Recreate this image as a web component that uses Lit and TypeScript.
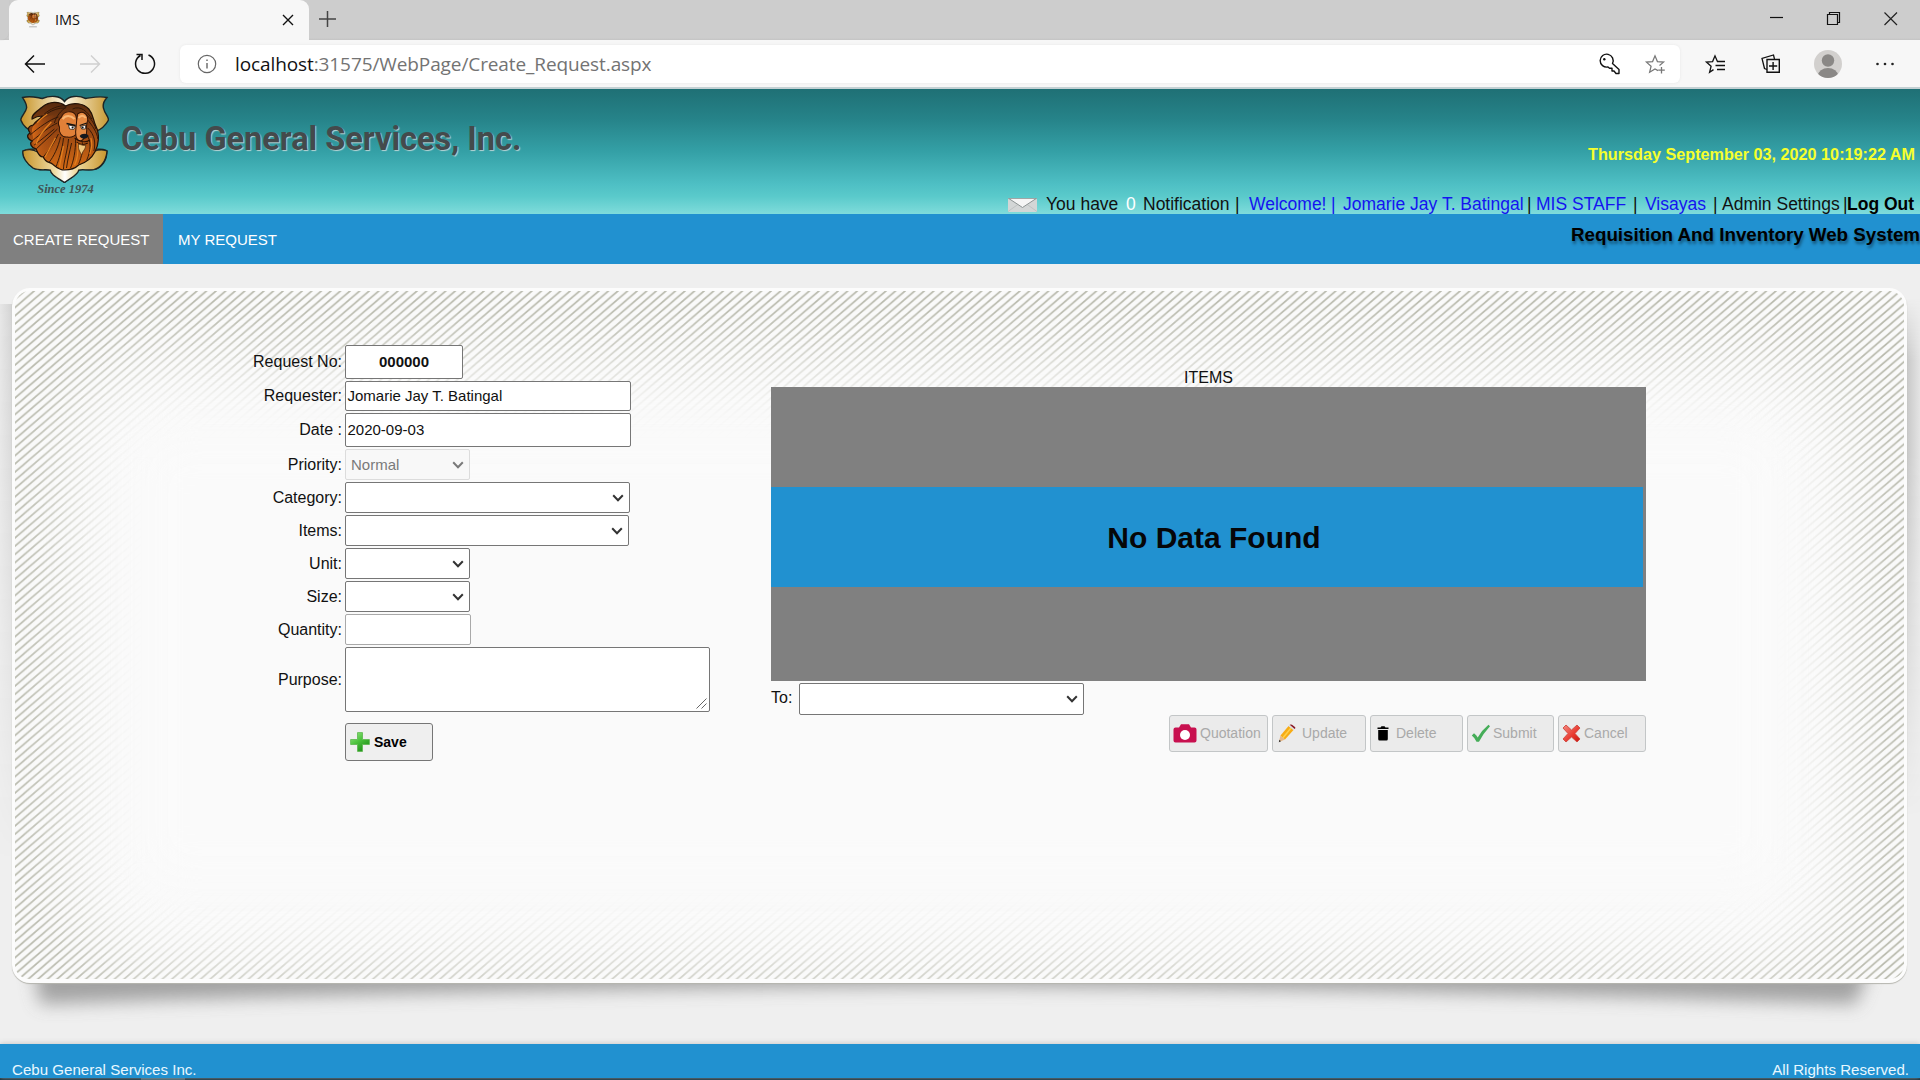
import { LitElement, html, css, svg, nothing } from "lit";
import { customElement, property } from "lit/decorators.js";

const chevron = html`<svg class="chev" width="12" height="8" viewBox="0 0 12 8"><path d="M1.2 1.3 6 6.2 10.8 1.3" fill="none" stroke="currentColor" stroke-width="2"/></svg>`;

const lion = svg`
  <defs>
    <linearGradient id="gold" x1="0" x2="1"><stop offset="0" stop-color="#c79427"/><stop offset=".5" stop-color="#fdf6e4"/><stop offset="1" stop-color="#c99a34"/></linearGradient>
    <linearGradient id="gold2" x1="0" x2="1"><stop offset="0" stop-color="#c8952c"/><stop offset=".38" stop-color="#f0dca4"/><stop offset=".5" stop-color="#ffffff"/><stop offset=".62" stop-color="#f0dca4"/><stop offset="1" stop-color="#c8952c"/></linearGradient>
    <linearGradient id="mane" x1="0" y1="0" x2="0" y2="1"><stop offset="0" stop-color="#54290f"/><stop offset=".45" stop-color="#9a4812"/><stop offset="1" stop-color="#d46a14"/></linearGradient>
    <linearGradient id="mane2" x1="0" y1="0" x2="1" y2="0"><stop offset="0" stop-color="#d96a18"/><stop offset="1" stop-color="#7a3310" stop-opacity="0"/></linearGradient>
  </defs>
  <path d="M2.5 2.5C11 .5 16 2.5 22 3.500C30 .2 40 .5 44 6.500C48 .5 58 .2 65 3.500C72 2.500 78 .8 86 2.500C83 6 81.500 11 83 14.500C83.500 18 87.500 21 87.500 25C84 32 79 35 74 37L74 54C79 54 84 54 86 56C86 65 81 73 73 74.500C67 75.500 62 74 58 75C57 80 51 82 44 87.500C36 82 31 80 30 75C25 74 19 76 13 73C7 69 2 62 3 56C7 54 11 54 15 54L14 37C8 35 3 31 .8 25C1 21 6 17 6.500 13C7 9 4 5 2.500 2.500Z" fill="url(#gold)" stroke="#1d2526" stroke-width="1.400"/>
  <path d="M3 56C12 52 20 57 26 65C34 69 54 69 61 65C68 57 78 53 86 56C85 66 80 73 73 74.500C67 75.500 62 74 58 75C57 80 51 82 44 87.500C36 82 31 80 30 75C25 74 19 76 13 73C7 69 2 62 3 56Z" fill="url(#gold2)" stroke="#1d2526" stroke-width="1.200"/>
  <path d="M12 24C11 20 17 16 22 12C29 6 39 6 45 11C52 7 63 8 68 14C73 20 72 25 75 31C79 39 78 50 74 57C70 65 64 68 58 70C54 74 48 75 44 75C38 75 35 71 32 69C29 66 26 69 23 62C19 62 17 57 16 54C11 53 9 48 12 46C7 44 6 40 10 38C7 34 8 31 13 30C15 26 19 25 22 21C18 21 15 22 12 24Z" fill="url(#mane)" stroke="#211208" stroke-width="1.200"/>
  <path d="M13 31C10 36 14 42 13 47C15 53 19 58 24 62C30 60 34 50 39 38L33 20C26 21 18 26 13 31Z" fill="url(#mane2)"/>
  <path d="M45 11C38 10 30 14 24 19M46 12C40 16 36 21 34 28M45 13C32 12 20 23 12 31M38 22C30 24 18 33 10 40M37 28C30 31 20 39 12 46M37 34C31 40 22 48 16 54M38 39C34 48 28 56 23 62M40 42C38 52 33 62 29 67M43 43C42 54 38 65 36 71M48 44C47 56 43 67 43 74M55 44C55 56 53 66 50 73M61 44C63 53 61 62 58 69M65 38C71 46 70 56 66 65M67 33C74 40 75 48 73 56M66 24C72 31 76 37 77 44M63 18C69 22 73 27 75 34M52 14C60 10 67 17 71 24M51 48C49 57 47 65 46 73M34 34C29 38 20 46 14 50" fill="none" stroke="#2b1508" stroke-width=".900"/>
  <path d="M31 27C24 34 18 42 16 49M35 43C31 51 27 57 25 62M43 51C41 60 40 67 39 72M57 48C58 58 57 64 54 70M70 43C72 48 71 53 69 59M27 19C23 22 19 25 17 28" fill="none" stroke="#e3811f" stroke-width="1.200"/>
  <path d="M41 22C43 16 52 15 55 20L57 28L57 35C57 41 50 43 47 42C41 43 38 37 39 32C37 29 38 24 41 22Z" fill="#e18038" stroke="#341405" stroke-width="1"/>
  <path d="M57 19C62 15 67 19 67 25C66 29 65 31 66 35C66 40 64 44 60 46C56 46 55 42 55 37L56 26Z" fill="#e68a43" stroke="#341405" stroke-width="1"/>
  <path d="M42 24C45 20 50 20 54 24M58 23C60 20 63 20 65 23" fill="none" stroke="#f8b573" stroke-width="2.200"/>
  <path d="M48 30 55 31.500 53 34.500 49 34ZM60 31.500 65 30 64.500 34 61 34Z" fill="#fff" stroke="#111" stroke-width=".700"/>
  <circle cx="52" cy="32.500" r="1" fill="#111"/><circle cx="62" cy="32.500" r="1" fill="#111"/>
  <path d="M46 28.500 55 30.500M59 30.500 66 28" stroke="#111" stroke-width="1.300"/>
  <path d="M59 41C61 38 66 38 68 41C66 44 61 45 59 41Z" fill="#15181e"/>
  <path d="M54 43C59 47 65 48 69 45M56 47C59 50 64 50 67 48" stroke="#2a1005" fill="none" stroke-width="1"/>
  <path d="M58 49C61 50 64 51 65 50C65 55 62 55 61 60C59 56 57 54 58 49Z" fill="#f0c87e" stroke="#5d3511" stroke-width=".800"/>`;

@customElement("browser-bar")
class BrowserBar extends LitElement {
  static styles = css`
    :host { display: block; height: 89px; font-family: "Open Sans", "Noto Sans", sans-serif; }
    svg { display: block; overflow: visible; flex: none; }
    .tabs { height: 40px; display: flex; box-sizing: border-box; background: linear-gradient(#cdcdcd, #cdcdcd 38px, #c4c4c4); }
    .lead { width: 9px; background: #cdcdcd; border-bottom-right-radius: 8px; box-shadow: 0 0 1px #bbb; }
    .tab { width: 300px; height: 40px; background: #f7f7f7; border-radius: 9px 9px 0 0; display: flex; align-items: center; box-sizing: border-box; padding: 0 15px 0 16px; }
    .fav { margin-right: 14px; }
    .name { font-size: 14.500px; color: #111; flex: 1; position: relative; top: -1px; }
    .plus { margin: 11px 0 0 10px; }
    .win { margin-left: auto; display: flex; padding: 12px 22px 0 0; gap: 43px; }
    .tools { height: 47px; background: #f7f7f7; display: flex; align-items: center; box-sizing: border-box; padding-left: 24px; }
    .nav { display: flex; align-items: center; width: 156px; }
    .nav svg:nth-child(2) { margin: 0 0 0 33px; }
    .nav svg:nth-child(3) { margin: 0 0 0 33px; }
    .addr { width: 1500px; height: 38px; margin-top: 1px; background: #fff; border-radius: 6px; box-shadow: 0 0 3px #e6e6e6; display: flex; align-items: center; box-sizing: border-box; padding: 0 15px 0 17px; }
    .url { margin-left: 18px; font-size: 19px; letter-spacing: -.1px; color: #737373; flex: 1; white-space: nowrap; }
    .url b { font-weight: 400; color: #111; }
    .addr .st { margin-left: 25px; }
    .right { display: flex; align-items: center; padding-left: 25px; }
    .r1 { margin-left: 35px; }
    .r2 { margin-left: 33px; }
    .r3 { margin-left: 34px; }
    .edge { height: 2px; background: #c3d0d3; }
  `;
  render() {
    return html`
      <div class="tabs">
        <div class="lead"></div>
        <div class="tab">
          <svg class="fav" width="16" height="16" viewBox="0 0 88 108">${lion}<path d="M18 100H70" stroke="#999" stroke-width="5"/></svg>
          <span class="name">IMS</span>
          <svg width="12" height="12" viewBox="0 0 12 12"><path d="M1 1 11 11M11 1 1 11" stroke="#111" stroke-width="1.400"/></svg>
        </div>
        <svg class="plus" width="17" height="16" viewBox="0 0 17 16"><path d="M8.500 0V16M0 8H17" stroke="#444" stroke-width="1.500"/></svg>
        <div class="win">
          <svg width="14" height="14"><path d="M0 5.500H13" stroke="#111" stroke-width="1.200"/></svg>
          <svg width="14" height="14"><path d="M.5 2.500H10.500V12.500H.5ZM2.500 2V.5H12.500V10.500H11" fill="none" stroke="#111" stroke-width="1.200"/></svg>
          <svg width="14" height="14"><path d="M.5.500 13 13M13 .5 .5 13" stroke="#222" stroke-width="1.200"/></svg>
        </div>
      </div>
      <div class="tools">
        <div class="nav">
          <svg width="22" height="20" viewBox="0 0 22 20"><path d="M10 1.500 1.500 10 10 18.500M1.500 10H21" fill="none" stroke="#111" stroke-width="1.500"/></svg>
          <svg width="22" height="20" viewBox="0 0 22 20"><path d="M12 1.500 20.500 10 12 18.500M20.500 10H1" fill="none" stroke="#d0d0d0" stroke-width="1.500"/></svg>
          <svg width="22" height="22" viewBox="0 0 22 22"><path d="M14.500 2A9.500 9.500 0 1 1 6.500 2.500M2.500 1.500H8V7" fill="none" stroke="#111" stroke-width="1.500"/></svg>
        </div>
        <div class="addr">
          <svg width="20" height="20" viewBox="0 0 20 20"><circle cx="10" cy="10" r="8.700" fill="none" stroke="#666" stroke-width="1.200"/><path d="M10 9V14.500M10 5.500V7" stroke="#666" stroke-width="1.400"/></svg>
          <span class="url"><b>localhost</b>:31575/WebPage/Create_Request.aspx</span>
          <svg width="21" height="21" viewBox="0 0 21 21"><path d="M9 13 10.500 14.200H13V17H15L17 19.500H20V15.500L13.500 9.500A6.500 6.500 0 1 0 9 13Z" fill="none" stroke="#111" stroke-width="1.400" stroke-linejoin="round"/><circle cx="5.300" cy="5.300" r="1.200" fill="#111"/></svg>
          <svg class="st" width="20" height="20" viewBox="0 0 20 20"><path d="M13 16.600 10 15 4.600 18.300 6.100 12.200 1.400 8.100 7.600 7.600 10 1.800 12.400 7.600 18.600 8.100 14.500 11.500" fill="none" stroke="#777" stroke-width="1.200"/><path d="M16.500 13V19.500M13.200 16.200H19.800" stroke="#777" stroke-width="1.300"/></svg>
        </div>
        <div class="right">
          <svg width="21" height="20" viewBox="0 0 21 20"><path d="M8.500 15.600 4.600 18.300 6.100 12.200 1.400 8.100 7.600 7.600 10 1.800 12.400 7.400" fill="none" stroke="#111" stroke-width="1.300"/><path d="M12 7.500H20M10.500 11.500H20M12 15.500H20" stroke="#111" stroke-width="1.400"/></svg>
          <svg class="r1" width="20" height="20" viewBox="0 0 20 20"><path d="M6 5.500H18.300V18.300H6Z M12.100 8V16M8 12H16.200" fill="none" stroke="#111" stroke-width="1.400"/><path d="M6 15.500 3.500 14.500 1 4.500 12.500 1 13.500 5" fill="none" stroke="#111" stroke-width="1.300"/></svg>
          <svg class="r2" width="28" height="28" viewBox="0 0 28 28"><defs><clipPath id="av"><circle cx="14" cy="14" r="14"/></clipPath></defs><g clip-path="url(#av)"><rect width="28" height="28" fill="#d2d0ce"/><circle cx="14" cy="10.500" r="6.200" fill="#8a8886"/><ellipse cx="14" cy="25.500" rx="10" ry="7.500" fill="#8a8886"/></g></svg>
          <svg class="r3" width="18" height="4"><circle cx="1.500" cy="2" r="1.300" fill="#222"/><circle cx="9" cy="2" r="1.300" fill="#222"/><circle cx="16.500" cy="2" r="1.300" fill="#222"/></svg>
        </div>
      </div>
      <div class="edge"></div>`;
  }
}

@customElement("site-header")
class SiteHeader extends LitElement {
  static styles = css`
    :host { display: block; }
    .banner { height: 125px; display: flex; background: linear-gradient(#1f7075 0%, #268389 24%, #34a0a6 50%, #4ebfc4 76%, #5acacb 86%, #7fdcdb 100%); }
    .brand { width: 960px; display: flex; }
    .crest { width: 89px; margin-left: 20px; padding-top: 6px; }
    .crest svg { display: block; }
    .since { font: italic 700 12.500px/16px "Liberation Serif", serif; color: #3f5557; text-align: center; margin-top: -2px; padding-left: 2px; }
    .title { margin: 28px 0 0 12px; font: 700 32.500px/44px Roboto, sans-serif; color: #444a4c; text-shadow: 1px 1px 1px #b9d4d5; white-space: nowrap; }
    .info { flex: 1; display: flex; flex-direction: column; align-items: flex-end; }
    .time { margin: 55px 5px 0 0; font: 700 16.200px/20px "Liberation Sans", sans-serif; color: #f6ff2c; white-space: nowrap; }
    .links { margin-top: 29px; width: 912px; height: 22px; display: grid; grid-template-columns: 38px 80px 17px 92px 14px 82px 12px 184px 9px 97px 12px 68px 9px 121px 4px 1fr; font: 17.500px/22px "Liberation Sans", sans-serif; color: #111; white-space: nowrap; }
    .u { color: #1414f0; }
    .w { color: #fff; }
    .k { color: #000; font-weight: 700; }
    .mail { display: block; margin-top: 5px; }
    .menu { height: 50px; background: #2191d0; display: flex; font: 15px/51px "Liberation Sans", sans-serif; color: #fff; }
    .menu a { padding: 0 15px; height: 50px; }
    .menu .on { background: #808080; padding: 0 13px; width: 137px; white-space: nowrap; }
    .sys { margin-left: auto; font-weight: 700; font-size: 18.750px; line-height: 41px; color: #000; text-shadow: 1px 3px 3px rgba(0,0,0,.4); white-space: nowrap; }
  `;
  render() {
    return html`
      <div class="banner">
        <div class="brand">
          <div class="crest"><svg width="89" height="88" viewBox="0 0 88 88" preserveAspectRatio="none">${lion}</svg><div class="since">Since 1974</div></div>
          <div class="title">Cebu General Services, Inc.</div>
        </div>
        <div class="info">
          <div class="time">Thursday September 03, 2020 10:19:22 AM</div>
          <div class="links">
            <svg class="mail" width="29" height="14" viewBox="0 0 29 14"><rect width="29" height="14" rx="1.500" fill="#d3d6d6"/><path d="M0 13.500 10.500 6M29 13.500 18.500 6" stroke="#bfc3c3" fill="none"/><path d="M.5.300H28.500L14.500 9.500Z" fill="#f5f5f5" stroke="#8d9494" stroke-width="1"/></svg>
            <span>You have</span><span class="w">0</span><span>Notification</span><span>|</span>
            <span class="u">Welcome!</span><span class="u">|</span><span class="u">Jomarie Jay T. Batingal</span><span>|</span>
            <span class="u">MIS STAFF</span><span>|</span><span class="u">Visayas</span><span>|</span><span>Admin Settings</span><span>|</span><span class="k">Log Out</span>
          </div>
        </div>
      </div>
      <div class="menu"><a class="on">CREATE REQUEST</a><a>MY REQUEST</a><span class="sys">Requisition And Inventory Web System</span></div>`;
  }
}

interface Field { label: string; w: number; h: number; kind: string; value?: string; gap: number }
const fields: Field[] = [
  { label: "Request No:", w: 118, h: 34, kind: "center", value: "000000", gap: 2 },
  { label: "Requester:", w: 286, h: 30, kind: "text", value: "Jomarie Jay T. Batingal", gap: 2 },
  { label: "Date :", w: 286, h: 34, kind: "text", value: "2020-09-03", gap: 2 },
  { label: "Priority:", w: 125, h: 31, kind: "select off", value: "Normal", gap: 2 },
  { label: "Category:", w: 285, h: 31, kind: "select", gap: 2 },
  { label: "Items:", w: 284, h: 31, kind: "select", gap: 2 },
  { label: "Unit:", w: 125, h: 31, kind: "select", gap: 2 },
  { label: "Size:", w: 125, h: 31, kind: "select", gap: 2 },
  { label: "Quantity:", w: 126, h: 31, kind: "soft", gap: 2 },
  { label: "Purpose:", w: 365, h: 65, kind: "area", gap: 0 },
];

@customElement("request-form")
class RequestForm extends LitElement {
  static styles = css`
    :host { display: block; width: 710px; font: 16px/20px "Liberation Sans", sans-serif; color: #111; }
    .row { display: flex; align-items: center; }
    .lab { width: 342px; margin-right: 3px; text-align: right; }
    .box { box-sizing: border-box; border: 1px solid #767676; border-radius: 2px; background: #fff; font-size: 15px; padding: 0 1.500px; display: flex; align-items: center; white-space: nowrap; }
    .center { justify-content: center; font-weight: 700; }
    .soft { border-color: #a9a9a9; }
    .select { padding: 0 5px; justify-content: flex-end; color: #333; }
    .select span { flex: 1; }
    .off { background: #f8f8f8; border-color: #dcdcdc; color: #7a7a7a; }
    .area { justify-content: flex-end; align-items: flex-end; padding: 2px; }
    .save { margin: 11px 0 0 345px; width: 88px; height: 38px; box-sizing: border-box; border: 1px solid #767676; border-radius: 3px; background: #efefef; display: flex; align-items: center; padding-left: 4px; gap: 4px; font: 700 14px/20px "Liberation Sans", sans-serif; color: #000; }
  `;
  render() {
    return html`
      ${fields.map((f) => html`
        <div class="row" style="margin-bottom:${f.gap}px">
          <div class="lab">${f.label}</div>
          <div class="box ${f.kind}" style="width:${f.w}px;height:${f.h}px">
            ${f.value ? html`<span>${f.value}</span>` : nothing}
            ${f.kind.startsWith("select") ? chevron : nothing}
            ${f.kind === "area" ? html`<svg width="11" height="11"><path d="M.5 10.500 10.500.5M5.500 10.500 10.500 5.500" stroke="#666" stroke-width="1"/></svg>` : nothing}
          </div>
        </div>`)}
      <div class="save">
        <svg width="20" height="20" viewBox="0 0 20 20"><defs><linearGradient id="g" x1="0" y1="0" x2=".7" y2="1"><stop offset="0" stop-color="#9be88a"/><stop offset=".5" stop-color="#4cc23c"/><stop offset="1" stop-color="#1d8d18"/></linearGradient></defs><path d="M7.500.6H12.500V7.500H19.400V12.500H12.500V19.400H7.500V12.500H.6V7.500H7.500Z" fill="url(#g)" stroke="#5bb84c" stroke-width=".800"/></svg>
        Save
      </div>`;
  }
}

const icons: Record<string, unknown> = {
  Quotation: html`<svg width="24" height="19" viewBox="0 0 24 19"><path d="M2.500 3.500H6L8 .3H16L18 3.500H21.500Q23.500 3.500 23.500 5.500V16.500Q23.500 18.500 21.500 18.500H2.500Q.5 18.500.5 16.500V5.500Q.5 3.500 2.500 3.500Z" fill="#c8104f"/><circle cx="12" cy="11" r="5" fill="#fff"/></svg>`,
  Update: html`<svg width="19" height="19" viewBox="0 0 19 19"><path d="M.8 18.300 2.500 11.500 7 15.500Z" fill="#e7b98a"/><path d="M.8 18.300 1.400 15.800 3 17.200Z" fill="#333"/><path d="M2.500 11.500 10.500 2 15.500 6 7 15.500Z" fill="#f7ac15"/><path d="M5 13.700 13 4" stroke="#ffd04a" stroke-width="1.500"/><path d="M10.500 2 11.700.8 16.700 4.700 15.500 6Z" fill="#ddd"/><path d="M11.700.8Q13 0 14 .8L17 3Q18 4 16.700 4.900Z" fill="#8a1825"/></svg>`,
  Delete: html`<svg width="12" height="15" viewBox="0 0 12 15"><path d="M.5 1.500H3.500L4.500.3H7.500L8.500 1.500H11.500V3H.5ZM1.200 4H10.800V13Q10.800 14.500 9.500 14.500H2.500Q1.200 14.500 1.200 13Z" fill="#000"/></svg>`,
  Submit: html`<svg width="20" height="19" viewBox="0 0 20 19"><path d="M.8 11.500 3 9.200Q5.500 11 6.700 13.500Q11 6 17.500.8L19 2.200Q12.500 9 8 17.800H5.500Q4 14 .8 11.500Z" fill="#45ad58"/></svg>`,
  Cancel: html`<svg width="19" height="19" viewBox="0 0 19 19"><defs><linearGradient id="r" x1="0" y1="0" x2="1" y2="1"><stop offset="0" stop-color="#f58a80"/><stop offset=".6" stop-color="#e8382e"/><stop offset="1" stop-color="#c41812"/></linearGradient></defs><path d="M4 1 9.500 6 15 1 18 4 13 9.500 18 15 15 18 9.500 13 4 18 1 15 6 9.500 1 4Z" fill="url(#r)" stroke="#cf4a42" stroke-width=".900" stroke-linejoin="round"/></svg>`,
};

@customElement("action-button")
class ActionButton extends LitElement {
  @property() label = "";
  static styles = css`
    :host { display: flex; align-items: center; box-sizing: border-box; height: 37px; border: 1px solid #c3c6c7; border-radius: 3px; background: #ebebeb; font: 14px/20px "Liberation Sans", sans-serif; color: #a9a9a9; }
    svg { display: block; flex: none; }
    span { margin-top: -1px; }
  `;
  render() { return html`${icons[this.label]}<span>${this.label}</span>`; }
}

@customElement("items-pane")
class ItemsPane extends LitElement {
  static styles = css`
    :host { display: block; width: 875px; font: 16px/20px "Liberation Sans", sans-serif; color: #111; }
    .head { text-align: center; height: 20px; line-height: 22px; }
    .grid { background: #808080; height: 294px; box-sizing: border-box; padding: 100px 3px 0 0; }
    .empty { background: #2191d0; height: 100px; text-align: center; font: 700 30px/101px "Liberation Sans", sans-serif; color: #060608; padding-left: 14px; box-sizing: border-box; }
    .to { display: flex; margin-top: 2px; }
    .to span { width: 28px; line-height: 30px; }
    .sel { width: 285px; height: 32px; box-sizing: border-box; border: 1px solid #767676; border-radius: 2px; background: #fff; display: flex; align-items: center; justify-content: flex-end; padding-right: 5px; color: #333; }
    .acts { display: grid; grid-template-columns: 99px 94px 93px 87px 88px; column-gap: 4px; justify-content: end; }
  `;
  render() {
    return html`
      <div class="head">ITEMS</div>
      <div class="grid"><div class="empty">No Data Found</div></div>
      <div class="to"><span>To:</span><div class="sel">${chevron}</div></div>
      <div class="acts">${[
        ["Quotation", 3, 3], ["Update", 5, 5], ["Delete", 6, 7], ["Submit", 3, 2], ["Cancel", 3, 3],
      ].map(([l, p, g]) => html`<action-button style="padding-left:${p}px;gap:${g}px" .label=${l as string}></action-button>`)}</div>`;
  }
}

@customElement("app-root")
class AppRoot extends LitElement {
  static styles = css`
    :host { display: flex; flex-direction: column; width: 1920px; height: 1080px; overflow: hidden; background: #efefef; }
    .main { height: 780px; box-sizing: border-box; padding: 24px 13px 0 12px; position: relative; overflow: hidden; }
    .panel { height: 695px; box-sizing: border-box; border: 3px solid #fcfcfc; border-bottom-width: 4px; border-radius: 18px; background: #fafafa; position: relative; overflow: hidden; box-shadow: 0 1px 1px #b5b5ae; }
    .curve { position: absolute; left: 0; top: 700px; }
    .side { position: absolute; width: 14px; }
    .l { left: 0; top: 40px; height: 560px; background: linear-gradient(90deg, #e6e6e6, #d0d0d0); -webkit-mask: linear-gradient(#000, transparent); }
    .r { right: 0; top: 34px; height: 520px; background: linear-gradient(90deg, #c6c6c6, #e4e4e4); -webkit-mask: linear-gradient(transparent, #000 12%, #000 30%, transparent); }
    .hatch { position: absolute; left: 0; top: 0; }
    .fade { position: absolute; left: 54px; right: 54px; top: 70px; bottom: 12px; background: #fafafa; filter: blur(36px); border-radius: 90px; }
    .fade2 { position: absolute; left: 130px; right: 130px; top: 150px; bottom: 100px; background: #fafafa; filter: blur(24px); }
    .content { position: relative; display: flex; padding: 54px 0 0 0; margin-left: -15px; }
    items-pane { margin: 22px 0 0 61px; }
    .foot { height: 34px; background: #2191d0; display: flex; justify-content: space-between; box-sizing: border-box; padding: 16px 11px 0 12px; font: 15.100px/20px "Liberation Sans", sans-serif; color: #e9f8ff; overflow: hidden; box-shadow: 0 -1px 5px #ccc; position: relative; }
    .strip { height: 2px; background: linear-gradient(90deg, #122c38 141px, #3c5a66 141px, #3c5a66 185px, #122c38 185px); }
  `;
  render() {
    return html`
      <browser-bar></browser-bar>
      <site-header></site-header>
      <div class="main">
        <div class="side l"></div><div class="side r"></div>
        <svg class="curve" width="1920" height="80"><defs><filter id="b" x="-5%" y="-50%" width="110%" height="250%"><feGaussianBlur stdDeviation="9"/></filter></defs><path d="M32 -10H1874L1856 40Q1400 24 950 22Q500 24 40 40Z" fill="#8f8f8f" opacity=".8" filter="url(#b)"/></svg>
        <div class="panel">
          <svg class="hatch" width="1889" height="688"><defs><pattern id="h" width="9.570" height="8.230" patternUnits="userSpaceOnUse"><path d="M-2.393 2.058 2.393-2.058M-2.393 10.288 11.963-2.058M7.178 10.288 11.963 6.172" stroke="#b8b9ac" stroke-width="1.700"/></pattern></defs><rect width="1889" height="688" fill="url(#h)"/></svg>
          <div class="fade"></div><div class="fade2"></div>
          <div class="content"><request-form></request-form><items-pane></items-pane></div>
        </div>
      </div>
      <div class="foot"><span>Cebu General Services Inc.</span><span>All Rights Reserved.</span></div>
      <div class="strip"></div>`;
  }
}
